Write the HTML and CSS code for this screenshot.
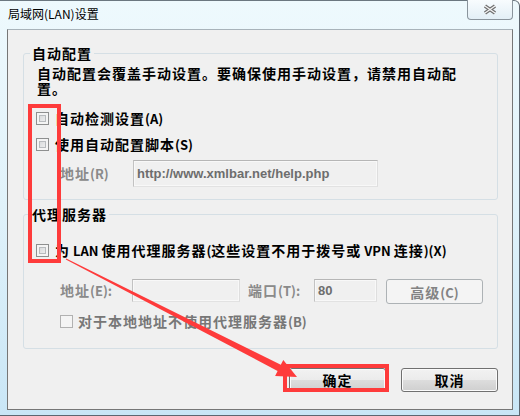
FILE: index.html
```html
<!DOCTYPE html>
<html lang="zh-CN">
<head>
    <meta charset="UTF-8">
    <meta name="viewport" content="width=device-width, initial-scale=1.0">
    <title>局域网(LAN)设置</title>
    <link rel="stylesheet" href="styles.css">
</head>
<body>
    <div class="window">
        <div class="titlebar">
            <span class="title">局域网(LAN)设置</span>
            <div class="close-btn">
                <svg width="14" height="11" viewBox="0 0 14 11">
                    <path d="M2 2 L12 9 M12 2 L2 9" stroke="#6f6f6f" stroke-width="3.6" fill="none"/>
                    <path d="M2 2 L12 9 M12 2 L2 9" stroke="#f4f4f4" stroke-width="1.3" fill="none"/>
                </svg>
            </div>
        </div>

        <div class="client">
            <fieldset class="group auto-group">
                <legend>自动配置</legend>
                <p class="desc">自动配置会覆盖手动设置。要确保使用手动设置，请禁用自动配置。</p>
                <label class="check-row first"><span class="checkbox"></span><span>自动检测设置<span class="lat">(A)</span></span></label>
                <label class="check-row"><span class="checkbox"></span><span>使用自动配置脚本<span class="lat">(S)</span></span></label>
                <div class="field-row script-row">
                    <span class="field-label script-label">地址<span class="lat">(R)</span></span>
                    <div class="textbox script-box">http://www.xmlbar.net/help.php</div>
                </div>
            </fieldset>

            <fieldset class="group proxy-group">
                <legend>代理服务器</legend>
                <label class="check-row proxy-check"><span class="checkbox"></span><span>为<span class="lat"> LAN </span>使用代理服务器<span class="lat">(</span>这些设置不用于拨号或<span class="lat"> VPN </span>连接<span class="lat">)(X)</span></span></label>
                <div class="field-row proxy-row">
                    <span class="field-label addr-label">地址<span class="lat">(E):</span></span>
                    <div class="textbox addr-box"></div>
                    <span class="field-label port-label">端口<span class="lat">(T):</span></span>
                    <div class="textbox port-box">80</div>
                    <button class="btn btn-disabled">高级<span class="lat">(C)</span></button>
                </div>
                <label class="check-row bypass-row"><span class="checkbox disabled"></span><span>对于本地地址不使用代理服务器<span class="lat">(B)</span></span></label>
            </fieldset>

            <div class="dialog-buttons">
                <button class="btn">确定</button>
                <button class="btn">取消</button>
            </div>
        </div>

        <!-- annotation marks drawn over the dialog -->
        <div class="mark mark-checks"></div>
        <div class="mark mark-ok"></div>
        <svg class="arrow" width="520" height="416" viewBox="0 0 520 416">
            <polygon fill="#fe3b3b" points="66.2,258.6 280.8,364.8 283.3,359.9 297,377 275.1,375.9 277.6,371.0 65.8,259.4"/>
        </svg>
    </div>
</body>
</html>
```

FILE: styles.css
```css
* {
    box-sizing: border-box;
}
body {
    margin: 0;
    background: #fff;
    font-family: "Noto Sans CJK SC", sans-serif;
}
.window {
    position: relative;
    width: 520px;
    height: 416px;
    background: linear-gradient(to bottom, #eef9fd 0%, #e0f2fa 50%, #c9e6f6 100%);
    border-top: 1px solid #6b7780;
    border-right: 1px solid #5d6670;
    border-bottom: 1px solid #5d6670;
    border-top-right-radius: 6px;
}
.titlebar {
    display: flex;
    align-items: flex-start;
    height: 28px;
}
.title {
    margin: 5px 0 0 8px;
    font-size: 12px;
    line-height: 16px;
    color: #000;
}
.close-btn {
    margin: -1px 6px 0 auto;
    width: 46px;
    height: 20px;
    border: 1px solid #8a949c;
    border-top: none;
    border-radius: 0 0 4px 4px;
    background: linear-gradient(#f8fcfe, #e3eff6);
    display: flex;
    align-items: center;
    justify-content: center;
}
.client {
    margin-left: 7px;
    width: 506px;
    height: 381px;
    border: 1px solid #767676;
    border-top-color: #a8b3ba;
    background: #f0f0f0;
    overflow: hidden;
}
.lat {
    font-size: 13px;
    letter-spacing: 0;
}

/* Group boxes */
.group {
    margin: 15px 14px 0 15px;
    padding: 0 0 12px;
    border: 1px solid #d5dfe5;
    border-radius: 3px;
    min-width: 0;
}
.group legend {
    margin-left: 6px;
    padding: 0 2px;
    font-size: 14px;
    line-height: 16px;
    font-weight: bold;
    letter-spacing: 1px;
}
.proxy-group {
    margin-top: 6px;
    padding-bottom: 17px;
}
.desc {
    margin: 5px 0 0;
    padding-left: 13px;
    max-width: 443px;
    font-size: 14px;
    line-height: 15px;
    font-weight: bold;
    letter-spacing: 1px;
}
.check-row {
    display: flex;
    align-items: center;
    gap: 6px;
    height: 20px;
    margin-top: 6px;
    padding-left: 12px;
    font-size: 14px;
    font-weight: bold;
    letter-spacing: 1px;
    white-space: pre;
}
.check-row.first {
    margin-top: 12px;
}
.proxy-check {
    margin-top: 18px;
}
.bypass-row {
    margin-top: 7px;
    padding-left: 36px;
    gap: 5px;
    color: #777;
}
.checkbox {
    width: 13px;
    height: 13px;
    flex: none;
    border: 1px solid #8e8f8f;
    background: linear-gradient(135deg, #cfd1d3, #f7f7f7);
    box-shadow: inset 0 0 0 2px #f4f4f4, inset 0 0 0 3px #b8bbbe;
}
.checkbox.disabled {
    border-color: #b1b1b1;
    background: #f4f4f4;
    box-shadow: none;
}

/* Text fields */
.field-row {
    display: flex;
    align-items: center;
    margin-top: 6px;
    padding-left: 36px;
}
.proxy-row {
    align-items: flex-start;
    margin-top: 19px;
}
.field-label {
    color: #8a8a8a;
    font-size: 14px;
    line-height: 23px;
    font-weight: bold;
    letter-spacing: 1px;
    flex: none;
}
.script-label {
    width: 73px;
}
.addr-label {
    width: 72px;
}
.port-label {
    width: 66px;
    margin-left: 8px;
}
.textbox {
    display: flex;
    align-items: center;
    height: 23px;
    padding-left: 3px;
    border: 1px solid;
    border-color: #b6b6b6 #dedede #e2e2e2 #c2c2c2;
    box-shadow: inset 0 0 0 1px #f8f8f8;
    background: #f0f0f0;
    color: #6d6d6d;
    font-family: "Liberation Sans", Arial, sans-serif;
    font-size: 13px;
    font-weight: bold;
    flex: none;
}
.script-box {
    width: 245px;
    height: 27px;
}
.addr-box {
    width: 108px;
}
.port-box {
    width: 63px;
}

/* Buttons */
.btn {
    width: 97px;
    height: 24px;
    padding: 0;
    border: 1px solid #707070;
    border-radius: 3px;
    background: linear-gradient(#f2f2f2 0%, #ebebeb 50%, #dddddd 51%, #cfcfcf 100%);
    box-shadow: inset 0 0 0 1px #fbfbfb;
    color: #000;
    font-family: "Noto Sans CJK SC", sans-serif;
    font-size: 14px;
    font-weight: bold;
    letter-spacing: 1px;
}
.btn-disabled {
    height: 25px;
    margin-left: 9px;
    border-color: #adb2b5;
    background: #f4f4f4;
    box-shadow: none;
    color: #838383;
}
.dialog-buttons {
    display: flex;
    justify-content: flex-end;
    gap: 15px;
    margin-top: 19px;
    padding-right: 14px;
}

/* Red annotation */
.mark {
    position: absolute;
    border: 4px solid #fe3b3b;
}
.mark-checks {
    left: 28px;
    top: 103px;
    width: 33px;
    height: 159px;
}
.mark-ok {
    left: 283px;
    top: 363px;
    width: 106px;
    height: 28px;
}
.arrow {
    position: absolute;
    left: 0;
    top: -1px;
    pointer-events: none;
}
```
